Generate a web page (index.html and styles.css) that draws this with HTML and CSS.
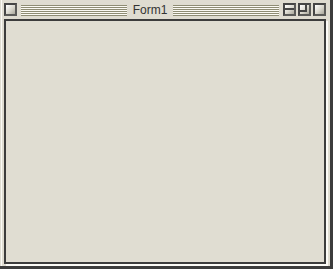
FILE: index.html
```html
<!DOCTYPE html>
<html lang="en">
<head>
    <meta charset="UTF-8">
    <title>Form1</title>
    <link rel="stylesheet" href="styles.css">
</head>
<body>
    <div class="window">
        <div class="frame">
            <div class="titlebar">
                <div class="btn"></div>
                <div class="stripes"></div>
                <div class="title">Form1</div>
                <div class="stripes"></div>
                <div class="btn btn-shade"></div>
                <div class="btn btn-max"></div>
                <div class="btn"></div>
            </div>
            <div class="client"></div>
        </div>
    </div>
</body>
</html>
```

FILE: styles.css
```css
* {
    margin: 0;
    padding: 0;
    box-sizing: border-box;
}

body {
    background: #dfdcd1;
    font-family: 'Liberation Sans', Arial, sans-serif;
}

.window {
    width: 333px;
    height: 269px;
    background: #dfdcd1;
    border-right: 3px solid #3c3c3c;
    border-bottom: 3px solid #3c3c3c;
    padding-left: 1px;
}

.frame {
    height: 100%;
    border-left: 1px solid #fbfaf6;
    padding: 0 4px 2px 2px;
    display: flex;
    flex-direction: column;
}

.titlebar {
    height: 19px;
    display: flex;
    align-items: flex-start;
    padding-top: 3px;
    gap: 2px;
}

.btn {
    position: relative;
    width: 13px;
    height: 13px;
    flex: none;
    border: 2px solid #454545;
    border-right-color: #5a5a58;
    border-bottom-color: #5a5a58;
    background: linear-gradient(135deg, #ffffff 0%, #d8d6cc 55%, #a9a79c 100%);
}

.btn-shade::after {
    content: "";
    position: absolute;
    left: 0;
    right: 0;
    top: 3px;
    height: 2px;
    background: #454545;
}

.btn-max::before {
    content: "";
    position: absolute;
    left: 5px;
    top: 0;
    width: 2px;
    height: 7px;
    background: #454545;
}

.btn-max::after {
    content: "";
    position: absolute;
    left: 0;
    top: 5px;
    width: 7px;
    height: 2px;
    background: #454545;
}

.stripes {
    flex: 1;
    height: 11px;
    margin: 2px 2px 0 2px;
    background: repeating-linear-gradient(to bottom, #8e8c74 0, #8e8c74 1px, #fbfaf4 1px, #fbfaf4 2px);
}

.title {
    font-size: 12px;
    line-height: 13px;
    margin-top: 1px;
    color: #333333;
    padding: 0 2px;
}

.client {
    flex: 1;
    border: 2px solid #3c3c3c;
    background: #e0ddd2;
    box-shadow: 2px 2px 0 #fbfaf6;
}
```
